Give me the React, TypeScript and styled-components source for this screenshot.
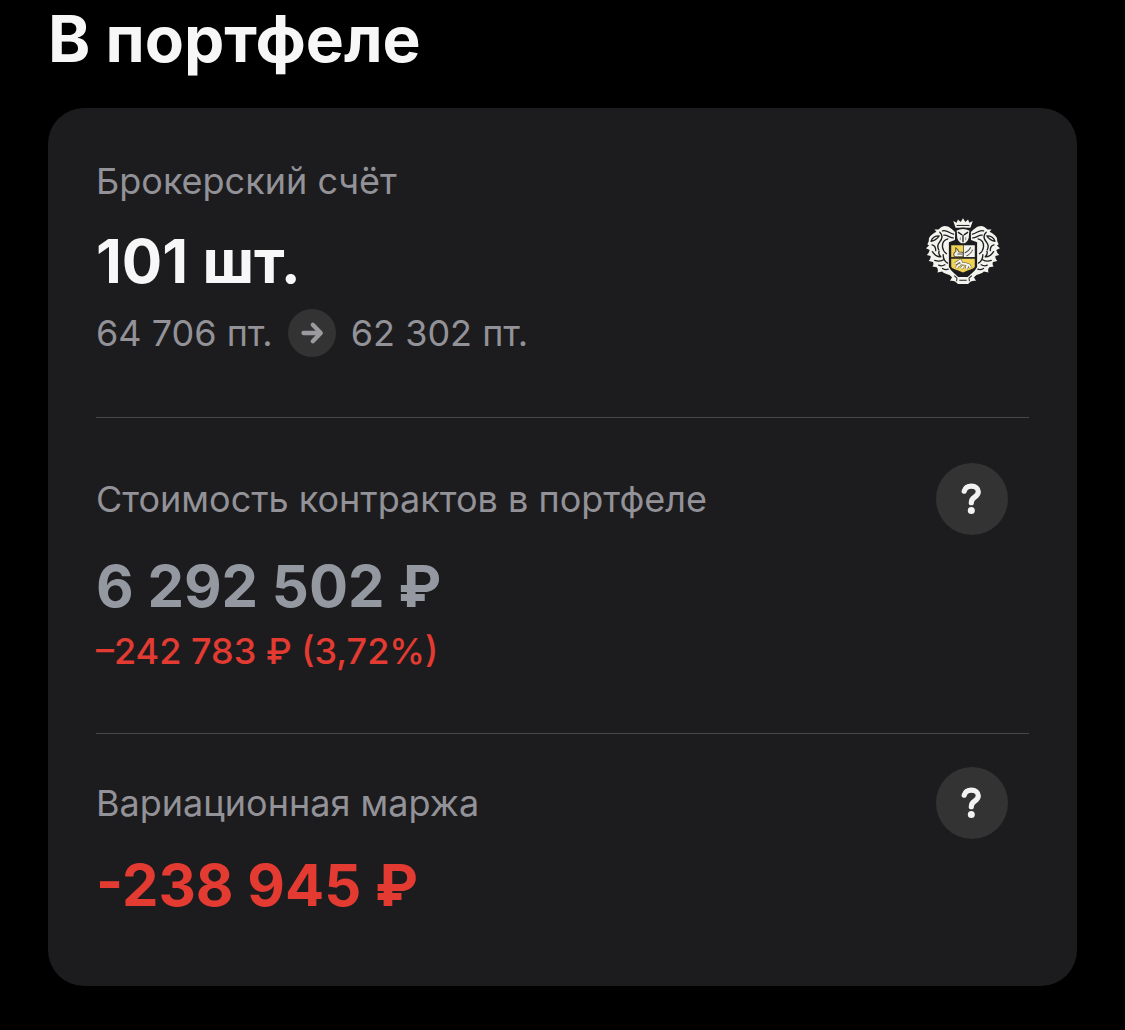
import React from 'react'
import styled, { createGlobalStyle } from 'styled-components'

const colors = {
  background: '#000000',
  card: '#1c1c1e',
  circle: '#333333',
  line: '#47474a',
  text: '#f7f7f8',
  text2: '#9498a1',
  muted: '#929298',
  red: '#e33b32',
}

const money = (value: number) => value.toString().replace(/\B(?=(\d{3})+$)/g, '\u00a0')

const ArrowIcon = () => (
  <svg width="24" height="24" viewBox="0 0 24 24" fill="none" stroke="#9a9a9f" strokeWidth="4.300" strokeLinecap="round" strokeLinejoin="round" aria-hidden="true">
    <path d="M3.500 12H20.500M12.800 3.800L20.800 12L12.800 20.200" />
  </svg>
)

const QuestionIcon = () => (
  <svg width="24" height="34" viewBox="0 0 24 34" fill="none" aria-hidden="true">
    <path d="M4.200 9.200C5.200 5.800 7.900 4.200 11.400 4.200C15.400 4.200 18.300 6.400 18.300 9.800C18.300 12.400 16.800 13.700 14.500 15.200C12.200 16.700 11.300 17.700 11.300 20.700" stroke="#f2f2f2" strokeWidth="5.200" strokeLinecap="round" strokeLinejoin="round" />
    <circle cx="11.300" cy="28.500" r="3.500" fill="#f2f2f2" />
  </svg>
)

// One half of the mantling, mirrored for the other side of the shield
const Leaves = () => (
  <g>
    <path
      d="M122 84C112 77 106 66 90 66C82 66 77 73 72 76L60 76L66 83C56 88 49 93 44 101L43 112L39 120L44 124L35 132L46 137C44 144 42 148 37 152L49 155C49 161 47 166 43 170L56 173C58 179 57 182 54 186L67 188C71 193 71 199 69 204L83 201C88 206 95 209 105 211L113 219L124 211L110 198L103 187V114L121 107Z"
      fill="#f4f4ef"
    />
    <g fill="none" stroke="#1f1f20" strokeWidth="4" strokeLinecap="round" strokeLinejoin="round">
      <path d="M117 90C104 88 98 76 84 80M116 101C106 101 99 92 88 93" />
      <path d="M50 111C53 101 62 95 74 95C69 103 61 109 50 111Z" />
      <path d="M76 84C85 92 83 104 75 114C69 121 68 127 73 137" />
      <path d="M100 104C88 107 83 116 84 128C85 137 89 143 96 148" />
      <path d="M53 122C61 124 64 130 64 139M54 142C61 153 70 158 79 157C72 150 72 145 74 141" />
      <path d="M61 168C71 172 80 170 87 166M86 151C86 163 91 171 99 176" />
      <path d="M73 182C80 186 86 184 91 181M84 192C91 196 96 196 101 194" />
    </g>
  </g>
)

const BrokerLogo = () => (
  <svg width="74" height="68" viewBox="35 39 220 202" role="img" aria-label="Герб банка">
    <Leaves />
    <g transform="translate(290 0) scale(-1 1)">
      <Leaves />
    </g>
    <path d="M116 51L126 56L130 46L138 54L145 43L152 54L160 46L164 56L174 51L167 71H123Z" fill="#f4f4ef" />
    <path d="M126 64H164" stroke="#1f1f20" strokeWidth="3" />
    <path d="M124 78C137 71 153 71 166 78L164 101C162 112 154 118 145 122C136 118 128 112 126 101Z" fill="#f4f4ef" stroke="#1f1f20" strokeWidth="4" />
    <path d="M130 84L142 92M160 84L148 92M145 92V114" stroke="#1f1f20" strokeWidth="4" />
    <path d="M137 99V108M153 99V108" stroke="#8a8a88" strokeWidth="3" />
    <path d="M105 119C120 121 133 121 145 116C157 121 170 121 185 119V190C180 200 160 202 145 210C130 202 110 200 105 190Z" fill="#1f1f20" />
    <path d="M110 123H145V158H110Z" fill="#f0d254" />
    <path d="M147 123H180V158H147Z" fill="#f4f4ef" />
    <path d="M110 163H180V187C176 195 158 197 145 204C132 197 114 195 110 187Z" fill="#f0d254" />
    <path d="M119 155C115 148 119 144 124 141L123 130L129 136L133 143L145 144V157H119Z" fill="#f4f4ef" stroke="#5e5432" strokeWidth="3" strokeLinejoin="round" />
    <path d="M128 149H143M150 146C159 142 165 136 168 129M155 155C164 151 171 144 174 136" fill="none" stroke="#55554f" strokeWidth="3" />
    <path d="M122 178L131 172L137 168L141 177L154 179L163 182L167 190M138 179L129 184L126 191M147 184L140 192M158 182L155 194" fill="none" stroke="#5e5432" strokeWidth="9" strokeLinejoin="round" />
    <path d="M122 178L131 172L137 168L141 177L154 179L163 182L167 190M138 179L129 184L126 191M147 184L140 192M158 182L155 194" fill="none" stroke="#f4f4ef" strokeWidth="6" strokeLinejoin="round" />
    <path d="M109 207C119 207 126 212 131 217H159C164 212 171 207 181 207L177 217L184 229C174 227 166 231 160 238H130C124 231 116 227 106 229L113 217Z" fill="#f4f4ef" />
    <path d="M119 213L127 221L126 230M171 213L163 221L164 230M134 227H156" fill="none" stroke="#1f1f20" strokeWidth="3" />
  </svg>
)

interface IAmount { label: string; value: string; tone: string; tall?: boolean; change?: string }

const AmountSection = ({ label, value, tone, tall, change }: IAmount) => (
  <Section $top={tall ? 45 : 33} $bottom={tall ? 58 : 65}>
    <LabelRow>
      <Label>{label}</Label>
      <HelpButton type="button" aria-label={`Подробнее: ${label}`}><QuestionIcon /></HelpButton>
    </LabelRow>
    <Value $color={tone} $size={58} $gap={tall ? 15 : 10}>{value}</Value>
    {change && <Change>{change}</Change>}
  </Section>
)

const App = () => (
  <>
    <GlobalStyle />
    <Page>
      <Title>В портфеле</Title>
      <Card>
        <Section $top={49} $bottom={60}>
          <AccountRow>
            <div>
              <Label>Брокерский счёт</Label>
              <Value $color={colors.text} $size={60} $gap={20}>101 шт.</Value>
              <PriceRow>
                <span>{money(64706)} пт.</span>
                <ArrowCircle><ArrowIcon /></ArrowCircle>
                <span>{money(62302)} пт.</span>
              </PriceRow>
            </div>
            <LogoBox><BrokerLogo /></LogoBox>
          </AccountRow>
        </Section>
        <AmountSection
          tall
          label="Стоимость контрактов в портфеле"
          value={`${money(6292502)} ₽`}
          tone={colors.text2}
          change={`–${money(242783)} ₽ (3,72%)`}
        />
        <AmountSection
          label="Вариационная маржа"
          value={`-${money(238945)} ₽`}
          tone={colors.red}
        />
      </Card>
    </Page>
  </>
)

export default App

const GlobalStyle = createGlobalStyle`
  * {
    box-sizing: border-box;
  }
  body {
    margin: 0;
    background: ${colors.background};
    font-family: Inter, 'Liberation Sans', sans-serif;
  }
`
const Page = styled.main`
  padding: 0 48px 44px;
`
const Title = styled.h1`
  margin: 0 0 30px;
  font-size: 64px;
  line-height: 78px;
  font-weight: 700;
  color: ${colors.text};
`
const Card = styled.section`
  padding: 0 48px;
  border-radius: 36px;
  background: ${colors.card};
`
const Section = styled.div<{ $top: number; $bottom: number }>`
  padding: ${({ $top }) => $top}px 0 ${({ $bottom }) => $bottom}px;
  & + & {
    border-top: 1px solid ${colors.line};
  }
`
const AccountRow = styled.div`
  display: flex;
  align-items: center;
  justify-content: space-between;
`
const LabelRow = styled.div`
  display: flex;
  align-items: center;
  justify-content: space-between;
  padding-right: 21px;
`
const Label = styled.div`
  font-size: 36px;
  line-height: 48px;
  color: ${colors.muted};
`
const Value = styled.div<{ $color: string; $size: number; $gap: number }>`
  margin-top: ${({ $gap }) => $gap}px;
  font-size: ${({ $size }) => $size}px;
  line-height: 72px;
  font-weight: 700;
  color: ${({ $color }) => $color};
`
const PriceRow = styled.div`
  display: flex;
  align-items: center;
  gap: 15px;
  margin-top: 12px;
  font-size: 36px;
  line-height: 48px;
  color: ${colors.muted};
`
const ArrowCircle = styled.span`
  display: flex;
  align-items: center;
  justify-content: center;
  width: 48px;
  height: 48px;
  border-radius: 50%;
  background: ${colors.circle};
`
const Change = styled.div`
  margin-top: 5px;
  font-size: 36px;
  line-height: 48px;
  font-weight: 500;
  color: ${colors.red};
`
const LogoBox = styled.div`
  display: flex;
  padding: 0 29px 12px 0;
`
const HelpButton = styled.button`
  display: flex;
  align-items: center;
  justify-content: center;
  width: 72px;
  height: 72px;
  padding: 0;
  border: 0;
  border-radius: 50%;
  background: ${colors.circle};
  cursor: pointer;
`
